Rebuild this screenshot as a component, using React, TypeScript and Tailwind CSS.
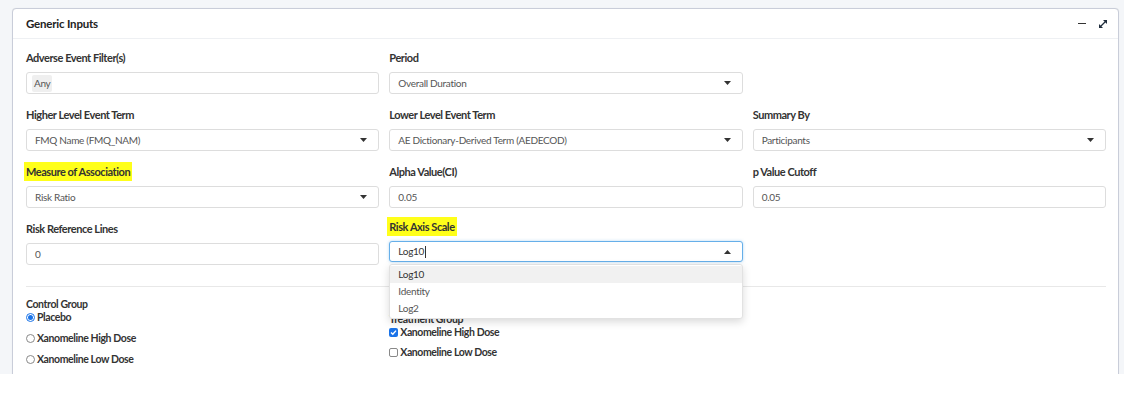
const font = { fontFamily: 'Lato, "Open Sans", sans-serif' }

function Label({ text, highlight }: { text: string; highlight?: boolean }) {
  return (
    <div className="mb-[7px] h-[14px] text-[11px] leading-[14px] font-bold tracking-[-0.45px] text-[#333]">
      {highlight ? (
        <span className="-ml-[2px] bg-[#ffff1a] px-[2px] py-[3px]">{text}</span>
      ) : (
        text
      )}
    </div>
  )
}

function Caret({ up }: { up?: boolean }) {
  return (
    <svg width="7" height="4" viewBox="0 0 7 4" className="mr-[3px]">
      {up ? <path d="M0 4 L3.5 0 L7 4 Z" fill="#333" /> : <path d="M0 0 L7 0 L3.5 4 Z" fill="#333" />}
    </svg>
  )
}

function TextBox({ value }: { value: string }) {
  return (
    <div className="flex h-[22px] items-center rounded-[3px] border border-[#ddd] bg-white px-[8px] text-[10px] tracking-[-0.3px] text-[#555]">
      {value}
    </div>
  )
}

function Select({ value }: { value: string }) {
  return (
    <div className="flex h-[22px] items-center justify-between rounded-[3px] border border-[#ddd] bg-white px-[8px] text-[10px] tracking-[-0.3px] text-[#555]">
      <span>{value}</span>
      <Caret />
    </div>
  )
}

function Field({ label, children, highlight }: { label: string; children: React.ReactNode; highlight?: boolean }) {
  return (
    <div className="mb-[14px]">
      <Label text={label} highlight={highlight} />
      {children}
    </div>
  )
}

function Radio({ checked, label }: { checked?: boolean; label: string }) {
  return (
    <div className="flex h-[13px] items-center gap-[2px] text-[10.5px] leading-[13px] font-bold tracking-[-0.4px] text-[#333]">
      {checked ? (
        <span className="flex h-[9px] w-[9px] items-center justify-center rounded-full border border-[#1a73e8] bg-white">
          <span className="h-[5px] w-[5px] rounded-full bg-[#1a73e8]" />
        </span>
      ) : (
        <span className="h-[9px] w-[9px] rounded-full border border-[#888] bg-white" />
      )}
      <span>{label}</span>
    </div>
  )
}

function Check({ checked, label }: { checked?: boolean; label: string }) {
  return (
    <div className="flex h-[13px] items-center gap-[2px] text-[10.5px] leading-[13px] font-bold tracking-[-0.4px] text-[#333]">
      {checked ? (
        <span className="flex h-[9px] w-[9px] items-center justify-center rounded-[2px] bg-[#1a73e8]">
          <svg width="7" height="7" viewBox="0 0 7 7">
            <path d="M1 3.6 L2.8 5.3 L6 1.6" stroke="#fff" strokeWidth="1.4" fill="none" />
          </svg>
        </span>
      ) : (
        <span className="h-[9px] w-[9px] rounded-[2px] border border-[#888] bg-white" />
      )}
      <span>{label}</span>
    </div>
  )
}

export default function App() {
  return (
    <div className="h-[394px] w-[1124px] bg-white" style={font}>
      <div className="h-[374px] overflow-hidden bg-[#f4f6f9] pt-[8px] pr-[5px] pl-[12px]">
        <div className="h-[400px] rounded-t-[4px] border border-[#c9cdd9] bg-white shadow-[0_0_1px_rgba(0,0,0,0.1)]">
          <div className="flex h-[30px] items-center justify-between border-b border-[#eef0f3] pr-[10px] pl-[13px]">
            <span className="text-[11.5px] font-bold tracking-[-0.2px] text-[#222]">Generic Inputs</span>
            <div className="flex items-center gap-[12px]">
              <span className="h-[1.5px] w-[8px] bg-[#333]" />
              <svg width="10" height="10" viewBox="0 0 10 10">
                <path d="M2.5 7.5 L7.5 2.5" stroke="#1f2d3d" strokeWidth="1.3" />
                <path d="M5 1 L9 1 L9 5 Z" fill="#1f2d3d" />
                <path d="M1 5 L1 9 L5 9 Z" fill="#1f2d3d" />
              </svg>
            </div>
          </div>

          <div className="pt-[12px] pr-[12px] pl-[13px]">
            <div className="grid grid-cols-3 gap-x-[10px]">
              <Field label="Adverse Event Filter(s)">
                <div className="flex h-[22px] items-center rounded-[3px] border border-[#ddd] bg-white px-[5px] text-[10px] tracking-[-0.3px] text-[#555]">
                  <span className="rounded-[2px] bg-[#efefef] px-[2px] py-[1px]">Any</span>
                </div>
              </Field>
              <Field label="Period">
                <Select value="Overall Duration" />
              </Field>
              <div />

              <Field label="Higher Level Event Term">
                <Select value="FMQ Name (FMQ_NAM)" />
              </Field>
              <Field label="Lower Level Event Term">
                <Select value="AE Dictionary-Derived Term (AEDECOD)" />
              </Field>
              <Field label="Summary By">
                <Select value="Participants" />
              </Field>

              <Field label="Measure of Association" highlight>
                <Select value="Risk Ratio" />
              </Field>
              <Field label="Alpha Value(CI)">
                <TextBox value="0.05" />
              </Field>
              <Field label="p Value Cutoff">
                <TextBox value="0.05" />
              </Field>

              <Field label="Risk Reference Lines">
                <TextBox value="0" />
              </Field>
              <div className="relative z-10 -mt-[2px]">
                <Label text="Risk Axis Scale" highlight />
                <div className="flex h-[21px] items-center justify-between rounded-[3px] border border-[#66afe9] bg-white px-[8px] text-[10px] tracking-[-0.3px] text-[#333] shadow-[0_0_3px_rgba(102,175,233,0.5)]">
                  <span className="flex items-center">
                    Log10
                    <span className="ml-[1px] h-[12px] w-px bg-[#333]" />
                  </span>
                  <Caret up />
                </div>
                <div className="absolute top-[44px] right-0 left-0 rounded-[3px] border border-[#e2e2e2] bg-white py-px text-[10px] tracking-[-0.3px] text-[#555] shadow-[0_3px_8px_rgba(0,0,0,0.15)]">
                  <div className="flex h-[17px] items-center bg-[#f1f1f1] px-[8px] text-[#333]">Log10</div>
                  <div className="flex h-[17px] items-center px-[8px]">Identity</div>
                  <div className="flex h-[17px] items-center px-[8px]">Log2</div>
                </div>
              </div>
              <div />
            </div>

            <div className="mt-[7px] border-t border-[#e8e8e8]" />

            <div className="grid grid-cols-3 gap-x-[10px] pt-[11px]">
              <div>
                <div className="h-[12px] text-[10.5px] leading-[12px] font-bold tracking-[-0.4px] text-[#333]">Control Group</div>
                <div className="mt-[1px] flex flex-col gap-[8px]">
                  <Radio checked label="Placebo" />
                  <Radio label="Xanomeline High Dose" />
                  <Radio label="Xanomeline Low Dose" />
                </div>
              </div>
              <div className="pt-[15px]">
                <div className="h-[12px] text-[10.5px] leading-[12px] font-bold tracking-[-0.4px] text-[#333]">Treatment Group</div>
                <div className="mt-[1px] flex flex-col gap-[7px]">
                  <Check checked label="Xanomeline High Dose" />
                  <Check label="Xanomeline Low Dose" />
                </div>
              </div>
              <div />
            </div>
          </div>
        </div>
      </div>
    </div>
  )
}
